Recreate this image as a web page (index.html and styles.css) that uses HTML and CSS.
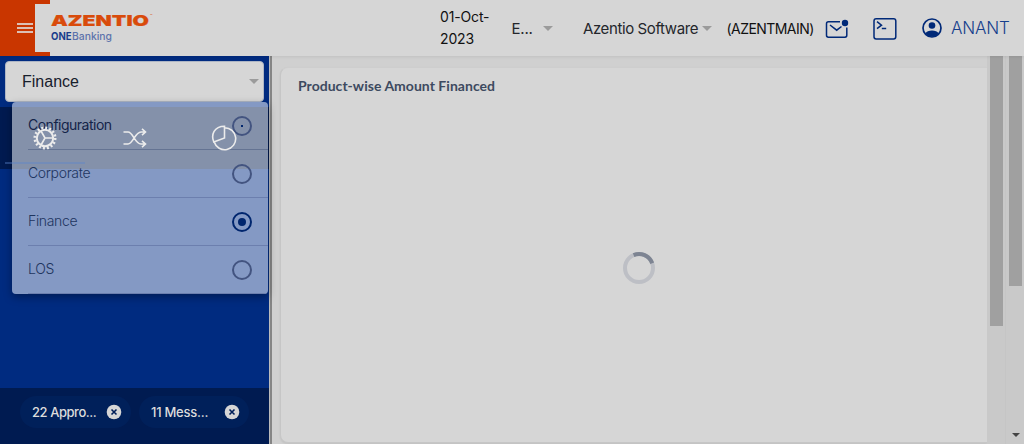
FILE: index.html
```html
<!DOCTYPE html>
<html lang="en">
<head>
<meta charset="utf-8">
<title>ONEBanking</title>
<link rel="stylesheet" href="styles.css">
</head>
<body>
<div class="app">
  <header class="header">
    <div class="brand">
      <button class="menu-btn" aria-label="Menu"><i></i><i></i><i></i></button>
      <div class="logo">
        <svg width="104" height="34" viewBox="0 0 104 34">
          <text class="logo-main" x="0" y="12.5" textLength="98" lengthAdjust="spacingAndGlyphs">AZENTIO</text>
          <text class="logo-tm" x="99" y="4">™</text>
          <text class="logo-one" x="0" y="27" textLength="20.5" lengthAdjust="spacingAndGlyphs">ONE</text>
          <text class="logo-sub" x="21" y="27" textLength="40" lengthAdjust="spacingAndGlyphs">Banking</text>
        </svg>
      </div>
    </div>
    <div class="date">01-Oct-<br>2023</div>
    <div class="pick pick-lang"><span>E...</span><b class="caret"></b></div>
    <div class="pick pick-org"><span>Azentio Software</span><b class="caret"></b></div>
    <span class="code">(AZENTMAIN)</span>
    <svg class="ico mail" width="24" height="20" viewBox="0 0 24 20"><path d="M15 2.8H3.4Q1.5 2.8 1.5 4.7V16.3Q1.5 18.2 3.4 18.2H20Q21.8 18.2 21.8 16.3V8.5M5 6l6.7 5.2 4.8-3.7"/><circle class="fill" cx="20" cy="4" r="3.2"/></svg>
    <svg class="ico term" width="24" height="22" viewBox="0 0 24 22"><rect x="1" y=".8" width="21.8" height="20.2" rx="2.2"/><path d="M4 3.7l4.5 3.5L4 10.6M8.8 10.4h4.4"/></svg>
    <svg class="ico user" width="22" height="22" viewBox="0 0 22 22"><circle cx="11" cy="11" r="9"/><circle class="fill" cx="11" cy="8.5" r="3.3"/><path class="fill" d="M4.5 16.2Q6.2 13.4 11 13.4T17.5 16.2Q15 19.7 11 19.7T4.5 16.2Z"/></svg>
    <span class="username">ANANT</span>
  </header>
  <div class="body">
    <aside class="sidebar">
      <div class="select"><span>Finance</span><b class="caret"></b></div>
      <nav class="tabs">
        <div class="tab active">
          <svg width="24" height="24" viewBox="0 0 24 24"><circle class="rim" cx="12" cy="12" r="8.2"/><circle class="teeth" cx="12" cy="12" r="10.2"/><path d="M12 12h8M12 12L8 5M12 12L8 19"/></svg>
        </div>
        <div class="tab">
          <svg width="24" height="20" viewBox="0 0 24 20"><path d="M.5 4H5c5 0 7 12 13 12h4.5M.5 16H5c5 0 7-12 13-12h4.5M19 .8L22.5 4 19 7.2M19 12.8l3.5 3.2-3.5 3.2"/></svg>
        </div>
        <div class="tab">
          <svg width="26" height="26" viewBox="0 0 26 26"><path d="M13.5 2.7A11 11 0 1 1 3.2 17M13.5 1.2V13L2.8 17C-.2 10 3 1.2 13.5 1.2Z"/></svg>
        </div>
      </nav>
      <div class="space"></div>
      <footer class="chips">
        <div class="chip"><span>22 Appro...</span><svg width="16" height="16" viewBox="0 0 16 16"><circle cx="8" cy="8" r="7.3"/><path d="M5.5 5.5l5 5M10.5 5.5l-5 5"/></svg></div>
        <div class="chip second"><span>11 Mess...</span><svg width="16" height="16" viewBox="0 0 16 16"><circle cx="8" cy="8" r="7.3"/><path d="M5.5 5.5l5 5M10.5 5.5l-5 5"/></svg></div>
      </footer>
      <div class="menu">
        <div class="option first"><span>Configuration</span><i class="radio dot"></i></div>
        <div class="option"><span>Corporate</span><i class="radio"></i></div>
        <div class="option"><span>Finance</span><i class="radio on"></i></div>
        <div class="option"><span>LOS</span><i class="radio"></i></div>
      </div>
    </aside>
    <main class="main">
      <section class="card">
        <h2>Product-wise Amount Financed</h2>
        <div class="loading"><svg width="34" height="34" viewBox="0 0 34 34"><circle class="ring" cx="17" cy="17" r="14"/><path class="arc" d="M11.6 4.1A14 14 0 0 1 30.2 12.2"/></svg></div>
      </section>
    </main>
    <div class="scroll inner"><div class="thumb"></div></div>
    <div class="scroll outer"><div class="thumb"></div><b class="down"></b></div>
  </div>
</div>
</body>
</html>
```
FILE: styles.css
```css
* { box-sizing: border-box; }
body { margin: 0; font-family: Inter, "Liberation Sans", sans-serif; background: #d0d0d0; }
.app { width: 1024px; height: 444px; overflow: hidden; display: flex; flex-direction: column; }
.header { height: 56px; flex: none; display: flex; align-items: center; background: #d6d6d6; color: #111; position: relative; z-index: 2; box-shadow: 0 1px 3px rgba(0,0,0,.08); }
.brand { width: 440px; height: 56px; display: flex; background: linear-gradient(90deg, #c93600 50px, transparent 50px); }
.menu-btn { width: 35px; height: 56px; border: 0; background: none; padding: 0 0 0 17px; display: flex; flex-direction: column; justify-content: center; gap: 2px; }
.menu-btn i { width: 16px; height: 2px; background: #dcc0b5; }
.logo { width: 130px; height: 48px; margin-top: 4px; padding: 9px 0 0 16px; background: #d6d6d6; }
.logo svg { display: block; overflow: visible; }
.logo-main { font: 900 15px Inter, sans-serif; fill: #d94b0b; stroke: #d94b0b; stroke-width: .2; }
.logo-tm { font: 4px Inter, sans-serif; fill: #d94b0b; }
.logo-sub { font: 500 11px Inter, sans-serif; fill: #5c72ab; }
.logo-one { font: 700 10.5px Inter, sans-serif; fill: #193d8c; }
.date { width: 71.5px; font-size: 14px; line-height: 22px; letter-spacing: -.15px; }
.pick { display: flex; align-items: center; font-size: 15px; color: #24262b; }
.pick-lang { width: 71.5px; gap: 10px; letter-spacing: -.2px; }
.pick-org { width: 143.5px; gap: 4px; letter-spacing: -.4px; white-space: nowrap; }
.caret { width: 0; height: 0; border: 5px solid transparent; border-top-color: #9b9b9b; border-bottom: 0; flex: none; }
.code { width: 99.5px; font-size: 14px; letter-spacing: -.55px; white-space: nowrap; }
.ico { fill: none; stroke: #002978; stroke-width: 1.5; flex: none; }
.ico .fill { fill: #002978; stroke: none; }
.mail { margin: 2px 0 0 -1px; }
.term { margin: 1px 0 0 24px; }
.user { margin-left: 24px; stroke-width: 1.7; }
.username { margin-left: 8px; font-size: 17px; font-weight: 300; color: #163f8d; letter-spacing: -.2px; }
.body { flex: 1; display: flex; min-height: 0; }
.sidebar { width: 272px; border-right: 2px solid #858585; background: linear-gradient(90deg, #002b80 269px, #bcbcbc 269px); display: flex; flex-direction: column; position: relative; padding-top: 5px; }
.select { margin-left: 5px; width: 259px; height: 41px; background: #d6d6d6; border: 1px solid #aeb6c5; border-radius: 4px; display: flex; align-items: center; justify-content: space-between; padding: 0 4px 0 16px; font: 16px "Liberation Sans", sans-serif; color: #18202c; flex: none; }
.tabs { width: 269px; height: 62px; margin-top: 5px; background: #001a50; display: flex; padding-left: 5px; flex: none; }
.tab { width: 90px; height: 62px; display: flex; align-items: center; justify-content: center; position: relative; z-index: 3; }
.tab:first-child { width: 80px; margin-right: 5px; }
.tab.active::after { content: ""; position: absolute; left: 0; bottom: 5px; width: 80px; height: 2px; background: rgba(91,132,206,.4); }
.tab svg { fill: none; stroke: #ececec; stroke-width: 1.6; }
.tab .rim { stroke-width: 2; }
.tab .teeth { stroke-width: 2.6; stroke-dasharray: 2 2.005; }
.space { flex: 1; }
.chips { width: 269px; height: 56px; background: #001b51; padding: 8px 20px; display: flex; gap: 8px; }
.chip { width: 111px; height: 32px; border-radius: 16px; background: #00205a; display: flex; align-items: center; justify-content: space-between; padding: 0 9px 0 12px; color: #dcdcdc; font-size: 13px; font-weight: 500; letter-spacing: -.45px; }
.chip.second { width: 110px; letter-spacing: -.25px; }
.chip circle { fill: #d6d6d6; }
.chip path { stroke: #001f59; stroke-width: 1.6; }
.menu { position: absolute; left: 12px; top: 46px; width: 256px; height: 192px; border-radius: 4px; overflow: hidden; background: linear-gradient(#8499c4 5px, #8491aa 5px, #8491aa 67px, #8499c4 67px); box-shadow: 0 3px 8px rgba(0,0,0,.35); }
.option { height: 48px; margin-left: 16px; border-bottom: 1px solid #6c7fae; padding: 0 16px 2px 0; display: flex; align-items: center; justify-content: space-between; font-size: 14px; font-weight: 300; color: #1e355f; letter-spacing: -.35px; }
.option.first { color: #142449; font-weight: 400; letter-spacing: -.5px; border-color: #647392; }
.radio { width: 20px; height: 20px; border: 2px solid #435480; border-radius: 50%; margin-top: 2px; display: flex; align-items: center; justify-content: center; }
.radio.on { border-color: #00266e; }
.radio.on::after { content: ""; width: 8px; height: 8px; border-radius: 50%; background: #00266e; }
.radio.dot::after { content: ""; width: 2px; height: 2px; background: #00266e; }
.main { width: 715px; padding: 11px 0 1px 8px; background: #d0d0d0; }
.card { height: 376px; border: 1px solid #c6c6c6; border-top-color: #cecece; border-right: 0; border-radius: 8px 0 0 8px; background: #d6d6d6; box-shadow: 0 1px 2px rgba(0,0,0,.08); display: flex; flex-direction: column; padding: 9px 0 0 17px; }
h2 { margin: 0; font: 700 14px/17px Lato, sans-serif; color: #3d4a60; letter-spacing: .03px; }
.loading { margin: 157px 0 0 324px; }
.loading svg { display: block; fill: none; stroke-width: 4; }
.ring { stroke: #bdbfc5; }
.arc { stroke: #7d8492; }
.scroll { background: #c9c9c9; }
.inner { width: 19px; padding-left: 3px; border-right: 1px solid #c5c5c5; }
.outer { width: 18px; padding-left: 3px; display: flex; flex-direction: column; justify-content: space-between; }
.thumb { width: 13px; height: 270px; background: #a0a0a0; }
.outer .thumb { height: 230px; }
.down { width: 0; height: 0; border: 4px solid transparent; border-top-color: #444; border-bottom: 0; margin: 0 0 7px 3px; }
```
